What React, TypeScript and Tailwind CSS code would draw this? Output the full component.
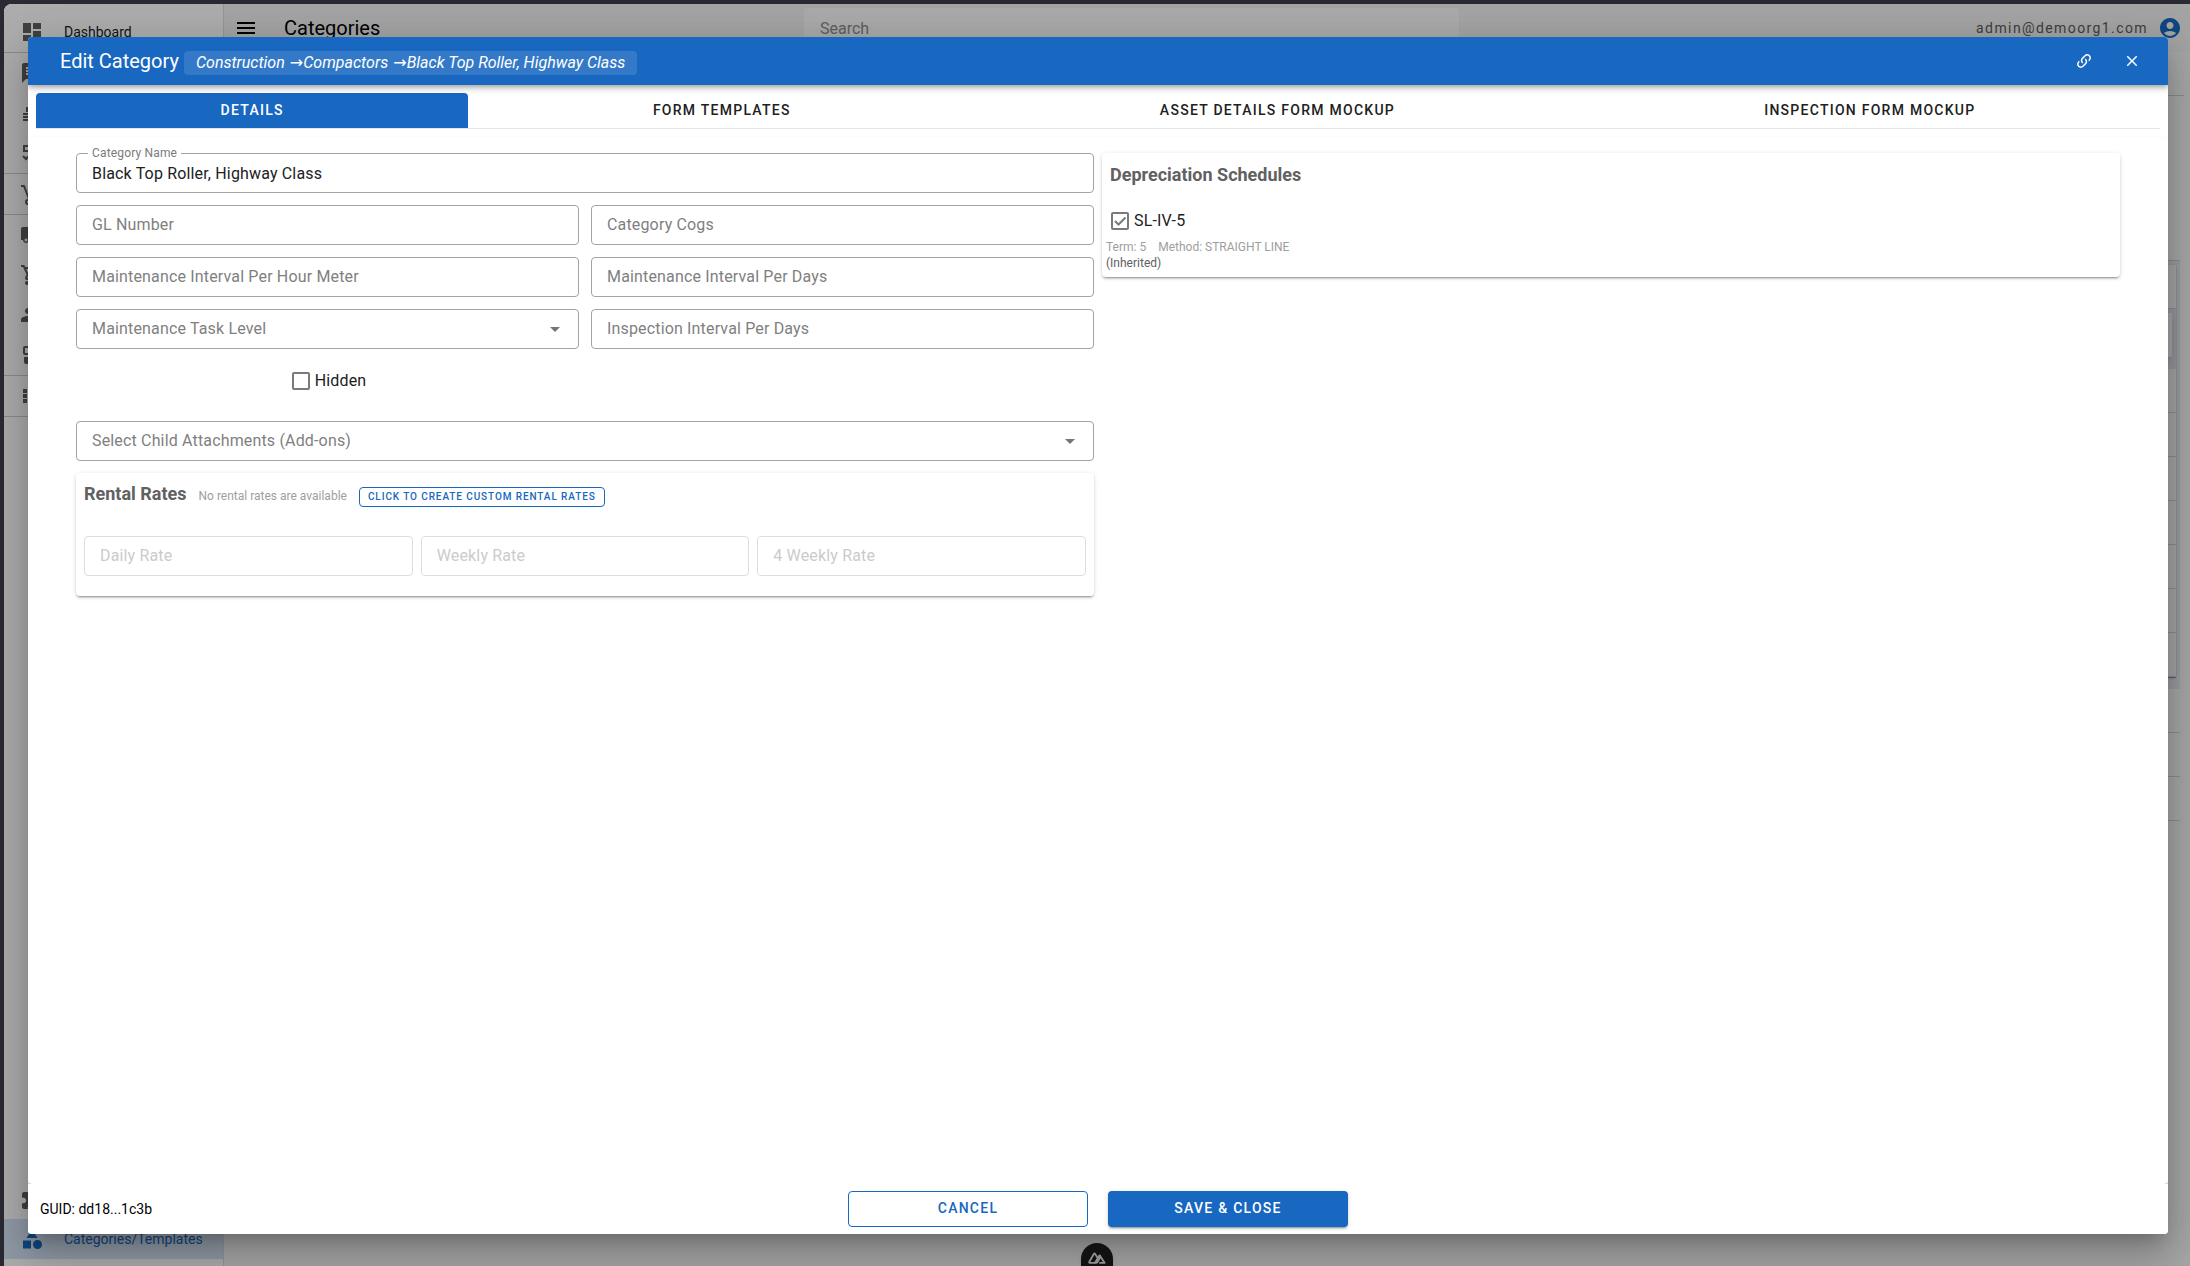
import React, { useState } from 'react';
import {
  MdAccountCircle,
  MdArrowDropDown,
  MdCategory,
  MdClose,
  MdDashboard,
  MdExtension,
  MdGroup,
  MdLocalShipping,
  MdMenu,
  MdMessage,
  MdOutlineShoppingCart,
  MdViewList,
} from 'react-icons/md';

interface FieldProps {
  id: string;
  label: string;
  value?: string;
  disabled?: boolean;
}

interface CheckboxProps {
  id: string;
  label: string;
  defaultChecked?: boolean;
}

interface IconProps {
  className?: string;
}

const JobsiteIcon: React.FC<IconProps> = ({ className }) => (
  <svg viewBox="0 0 24 24" fill="currentColor" className={className}>
    <path d="M8 3h8v2h2v6H6V6h2zM3 12h18v2H3zM3 15h18v2H3zM3 18h18v2H3z" />
  </svg>
);

const ChecklistIcon: React.FC<IconProps> = ({ className }) => (
  <svg viewBox="0 0 24 24" fill="none" stroke="currentColor" strokeWidth="2" className={className}>
    <path d="M4 5h5v5H4zM3 15l3 3 5-5M13 7h8M13 17h8" />
  </svg>
);

const DollyIcon: React.FC<IconProps> = ({ className }) => (
  <svg viewBox="0 0 24 24" fill="none" stroke="currentColor" strokeWidth="2" className={className}>
    <path d="M1 4h3l5 13M10 18l11-4M8 9l8-4 4 8-9 3" />
    <circle cx="8" cy="20" r="2" />
  </svg>
);

const AccountsIcon: React.FC<IconProps> = ({ className }) => (
  <svg viewBox="0 0 24 24" fill="currentColor" className={className}>
    <path d="M5 3h5v2H5v5h5v2H5a2 2 0 0 1-2-2V5a2 2 0 0 1 2-2zM14 3h6v9h-6zM4 14h7v7H6a2 2 0 0 1-2-2zM14 14h6v7h-6z" />
  </svg>
);

const NAV_GROUPS: { name: string; icon: React.ComponentType<IconProps> }[][] = [
  [
    { name: 'Messages', icon: MdMessage },
    { name: 'Jobsites', icon: JobsiteIcon },
    { name: 'Checklists', icon: ChecklistIcon },
  ],
  [{ name: 'Returns', icon: DollyIcon }],
  [
    { name: 'Deliveries', icon: MdLocalShipping },
    { name: 'Orders', icon: MdOutlineShoppingCart },
    { name: 'Customers', icon: MdGroup },
    { name: 'Accounts', icon: AccountsIcon },
  ],
  [{ name: 'Inventory', icon: MdViewList }],
];

const TABS = ['Details', 'Form Templates', 'Asset Details Form Mockup', 'Inspection Form Mockup'];

const BREADCRUMB = ['Construction', 'Compactors', 'Black Top Roller, Highway Class'];

const CARD_SHADOW =
  'shadow-[0_2px_1px_-1px_rgba(0,0,0,0.2),0_1px_1px_0_rgba(0,0,0,0.14),0_1px_3px_0_rgba(0,0,0,0.12)]';

const PANEL_SHADOW =
  'shadow-[0_3px_1px_-2px_rgba(0,0,0,0.2),0_2px_2px_0_rgba(0,0,0,0.14),0_1px_5px_0_rgba(0,0,0,0.12)]';

const LinkVariantIcon: React.FC = () => (
  <svg viewBox="0 0 24 24" fill="currentColor" className="size-[18px]">
    <path d="M10.59,13.41C11,13.8 11,14.44 10.59,14.83C10.2,15.22 9.56,15.22 9.17,14.83C7.22,12.88 7.22,9.71 9.17,7.76V7.76L12.71,4.22C14.66,2.27 17.83,2.27 19.78,4.22C21.73,6.17 21.73,9.34 19.78,11.29L18.29,12.78C18.3,11.96 18.17,11.14 17.89,10.36L18.36,9.88C19.54,8.71 19.54,6.81 18.36,5.64C17.19,4.46 15.29,4.46 14.12,5.64L10.59,9.17C9.41,10.34 9.41,12.24 10.59,13.41M13.41,9.17C13.8,8.78 14.44,8.78 14.83,9.17C16.78,11.12 16.78,14.29 14.83,16.24V16.24L11.29,19.78C9.34,21.73 6.17,21.73 4.22,19.78C2.27,17.83 2.27,14.66 4.22,12.71L5.71,11.22C5.7,12.04 5.83,12.86 6.11,13.65L5.64,14.12C4.46,15.29 4.46,17.19 5.64,18.36C6.81,19.54 8.71,19.54 9.88,18.36L13.41,14.83C14.59,13.66 14.59,11.76 13.41,10.59C13,10.2 13,9.56 13.41,9.17Z" />
  </svg>
);

const TextField: React.FC<FieldProps> = ({ id, label, value = '', disabled }) => {
  const [text, setText] = useState(value);
  return (
    <div className="relative tracking-[0.01em]">
      <input
        id={id}
        value={text}
        disabled={disabled}
        onChange={(e) => setText(e.target.value)}
        className="block h-10 w-full rounded border border-[#a3a3a3] bg-white px-[15px] text-base text-[#212121] outline-none focus:border-[#1867c0] disabled:border-[#dedede]"
      />
      {text ? (
        <label htmlFor={id} className="absolute -top-2 left-3 bg-white px-1 text-xs text-[#7b7b7b]">
          {label}
        </label>
      ) : (
        <label
          htmlFor={id}
          className={`pointer-events-none absolute top-2 left-4 text-base ${disabled ? 'text-[#cbcbcb]' : 'text-[#7f7f7f]'}`}
        >
          {label}
        </label>
      )}
    </div>
  );
};

const SelectField: React.FC<FieldProps> = ({ id, label }) => (
  <div className="relative tracking-[0.01em]">
    <select
      id={id}
      className="block h-10 w-full appearance-none rounded border border-[#a3a3a3] bg-white px-[15px] text-base outline-none focus:border-[#1867c0]"
    >
      <option value="" />
    </select>
    <label htmlFor={id} className="pointer-events-none absolute top-2 left-4 text-base text-[#7f7f7f]">
      {label}
    </label>
    <MdArrowDropDown className="pointer-events-none absolute top-2 right-3 size-6 text-[#757575]" />
  </div>
);

const Checkbox: React.FC<CheckboxProps> = ({ id, label, defaultChecked }) => (
  <div className="flex h-6 items-center gap-0.5">
    <span className="relative flex size-6 items-center justify-center">
      <input
        id={id}
        type="checkbox"
        defaultChecked={defaultChecked}
        className="peer size-[18px] appearance-none rounded-xs border-2 border-[#7a7a7a]"
      />
      <svg
        viewBox="0 0 24 24"
        className="pointer-events-none absolute inset-0 hidden fill-none stroke-[#7a7a7a] stroke-2 peer-checked:block"
      >
        <path d="M7 12l3.5 3.5L17.5 8.5" />
      </svg>
    </span>
    <label htmlFor={id} className="text-base tracking-[0.01em] text-[#212121]">
      {label}
    </label>
  </div>
);

const Sidebar: React.FC = () => (
  <nav className="flex w-[220px] shrink-0 flex-col border-r border-[#dcdcdc] bg-white pt-2 pb-[7px] text-sm text-[#212121]">
    <a href="#dashboard" className="flex h-[41px] items-center gap-5 border-b border-[#cfcfcf] pl-4">
      <MdDashboard className="size-6 text-[#616161]" />
      Dashboard
    </a>
    {NAV_GROUPS.map((group, i) => (
      <div key={i} className="border-b border-[#cfcfcf] last:border-0">
        {group.map(({ name, icon: Icon }) => (
          <a key={name} href="#" aria-label={name} className="flex h-10 items-center pl-4">
            <Icon className="size-6 text-[#616161]" />
          </a>
        ))}
      </div>
    ))}
    <a href="#extensions" aria-label="Extensions" className="mt-auto flex h-10 items-center pl-4">
      <MdExtension className="size-6 text-[#616161]" />
    </a>
    <a href="#categories" className="flex h-10 items-center gap-5 bg-[#d4e3f5] pl-4 text-[#1867c0]">
      <MdCategory className="size-6" />
      Categories/Templates
    </a>
  </nav>
);

const AppBar: React.FC = () => (
  <header className="flex h-12 shrink-0 items-center bg-[#f2f2f2]">
    <div className="flex w-[29.5%] items-center gap-[26px] pl-2.5">
      <button type="button" aria-label="Menu">
        <MdMenu className="size-6" />
      </button>
      <h1 className="text-xl">Categories</h1>
    </div>
    <input
      type="search"
      aria-label="Search"
      placeholder="Search"
      className="h-10 w-1/3 rounded bg-[#fbfbfb] px-4 text-base placeholder:text-[#8c8c8c]"
    />
    <div className="flex flex-1 items-center justify-end gap-2.5 pr-2">
      <span className="text-sm tracking-widest text-[#5c5c5c]">admin@demoorg1.com</span>
      <MdAccountCircle className="size-6 text-[#1867c0]" />
    </div>
  </header>
);

const TableBackdrop: React.FC = () => (
  <div className="flex-1 bg-[#f7f7f7] pt-[43px] pr-1.5">
    <div className="border-t border-[#cfcfcf] pt-[164px] pr-1">
      <div className="border-t border-[#cfcfcf] bg-[#e4e7ec] pt-1 pr-1 pb-3">
        <div className={`bg-[#f5f5f5] ${CARD_SHADOW}`}>
          <div className="h-11 border-b border-[#cfcfcf]" />
          <div className="h-[60px] bg-[#dde1e7] pt-1 pr-1">
            <div className="h-11 bg-[#f5f5f5] shadow-md" />
          </div>
          {[1, 2, 3, 4, 5, 6, 7].map((row) => (
            <div key={row} className="h-11 border-b border-[#cfcfcf]" />
          ))}
        </div>
      </div>
      {[1, 2, 3].map((row) => (
        <div key={row} className="h-11 border-b border-[#cfcfcf]" />
      ))}
    </div>
  </div>
);

const DialogHeader: React.FC = () => (
  <div className="relative z-10 flex h-12 shrink-0 items-center bg-[#1867c0] pr-3 pl-8 text-white shadow-[0_2px_4px_-1px_rgba(0,0,0,0.2),0_4px_5px_0_rgba(0,0,0,0.14),0_1px_10px_0_rgba(0,0,0,0.12)]">
    <div className="flex items-baseline gap-[5px]">
      <h2 id="dialog-title" className="text-xl">
        Edit Category
      </h2>
      <span className="rounded bg-white/12 px-3 text-base italic">
        {BREADCRUMB.map((crumb, i) => (
          <React.Fragment key={crumb}>
            {i > 0 && <span className="font-['DejaVu_Sans',sans-serif]"> →</span>}
            {crumb}
          </React.Fragment>
        ))}
      </span>
    </div>
    <button type="button" aria-label="Copy link" className="ml-auto flex size-12 items-center justify-center">
      <LinkVariantIcon />
    </button>
    <button type="button" aria-label="Close" className="flex size-12 items-center justify-center">
      <MdClose className="size-[18px]" />
    </button>
  </div>
);

const DialogTabs: React.FC = () => {
  const [active, setActive] = useState(TABS[0]);
  return (
    <div role="tablist" className="m-2 flex h-9 shrink-0 border-b border-[#e6e6e6]">
      {TABS.map((tab) => (
        <button
          key={tab}
          type="button"
          role="tab"
          aria-selected={tab === active}
          onClick={() => setActive(tab)}
          className={`flex-auto rounded-t pb-0.5 text-sm font-medium tracking-[0.09em] uppercase ${
            tab === active ? 'bg-[#1867c0] text-white' : 'text-[#212121]'
          }`}
        >
          {tab}
        </button>
      ))}
    </div>
  );
};

const RentalRates: React.FC = () => (
  <section className={`rounded px-2 pt-[7px] pb-5 ${PANEL_SHADOW}`}>
    <div className="flex items-baseline gap-3">
      <h3 className="text-lg leading-7 font-bold text-[#616161]">Rental Rates</h3>
      <span className="text-xs text-[#9e9e9e]">No rental rates are available</span>
      <button
        type="button"
        className="h-5 rounded border border-[#1867c0] px-2 text-[10px] font-medium tracking-[0.09em] text-[#1867c0] uppercase"
      >
        Click to create custom rental rates
      </button>
    </div>
    <div className="mt-7 grid grid-cols-3 gap-2">
      <TextField id="daily-rate" label="Daily Rate" disabled />
      <TextField id="weekly-rate" label="Weekly Rate" disabled />
      <TextField id="four-weekly-rate" label="4 Weekly Rate" disabled />
    </div>
  </section>
);

const DepreciationSchedules: React.FC = () => (
  <section className={`rounded px-1 pt-2 pb-1.5 ${PANEL_SHADOW}`}>
    <h3 className="pl-1 text-lg leading-7 font-bold text-[#616161]">Depreciation Schedules</h3>
    <div className="mt-5 mb-1.5 pl-0.5">
      <Checkbox id="sl-iv-5" label="SL-IV-5" defaultChecked />
    </div>
    <p className="flex gap-3 text-xs text-[#9e9e9e]">
      <span>Term: 5</span>
      <span>Method: STRAIGHT LINE</span>
    </p>
    <p className="text-xs text-[#616161]">(Inherited)</p>
  </section>
);

const EditCategoryDialog: React.FC = () => (
  <div
    role="dialog"
    aria-labelledby="dialog-title"
    className="flex w-full flex-col overflow-hidden rounded bg-white shadow-[0_11px_15px_-7px_rgba(0,0,0,0.2),0_24px_38px_3px_rgba(0,0,0,0.14),0_9px_46px_8px_rgba(0,0,0,0.12)]"
  >
    <DialogHeader />
    <DialogTabs />
    <div className={`grid flex-1 grid-cols-2 content-start items-start gap-2 rounded px-12 pt-4 ${CARD_SHADOW}`}>
      <form className="grid grid-cols-2 gap-3">
        <div className="col-span-2">
          <TextField id="category-name" label="Category Name" value="Black Top Roller, Highway Class" />
        </div>
        <TextField id="gl-number" label="GL Number" />
        <TextField id="category-cogs" label="Category Cogs" />
        <TextField id="interval-hours" label="Maintenance Interval Per Hour Meter" />
        <TextField id="interval-days" label="Maintenance Interval Per Days" />
        <SelectField id="task-level" label="Maintenance Task Level" />
        <TextField id="inspection-days" label="Inspection Interval Per Days" />
        <div className="mb-2 flex h-10 items-center justify-center">
          <Checkbox id="hidden" label="Hidden" />
        </div>
        <div className="col-span-2">
          <SelectField id="child-attachments" label="Select Child Attachments (Add-ons)" />
        </div>
        <div className="col-span-2">
          <RentalRates />
        </div>
      </form>
      <DepreciationSchedules />
    </div>
    <footer className="relative z-10 grid shrink-0 grid-cols-[1fr_auto_1fr] items-center bg-white px-3 pt-[7px] pb-[7px]">
      <span className="text-sm">GUID: dd18...1c3b</span>
      <div className="flex gap-5">
        <button
          type="button"
          className="h-9 w-60 rounded border border-[#1867c0] pb-0.5 text-sm font-medium tracking-[0.09em] text-[#1867c0] uppercase"
        >
          Cancel
        </button>
        <button
          type="button"
          className={`h-9 w-60 rounded bg-[#1867c0] pb-0.5 text-sm font-medium tracking-[0.09em] text-white uppercase ${PANEL_SHADOW}`}
        >
          Save &amp; Close
        </button>
      </div>
    </footer>
  </div>
);

const DevToolsBadge: React.FC = () => (
  <button
    type="button"
    aria-label="DevTools"
    className="absolute bottom-0 left-1/2 flex h-[23px] w-8 -translate-x-1/2 items-end justify-center rounded-t-full bg-[#111] pb-0.5 text-[#8f8f8f] shadow-md"
  >
    <svg viewBox="0 0 20 13" fill="none" stroke="currentColor" strokeWidth="2" strokeLinejoin="round" className="h-3 w-[18px]">
      <path d="M9 12H2.2Q.8 12 1.5 10.6L6.4 2Q7.2.8 8 2L10.6 6.4" />
      <path d="M9 12Q10 12 10.7 10.8L14 5L18.5 12H12.5M10.8 6.6L8.6 10.6Q8 12 6.5 12M10.8 6.6L12.2 4.2Q13 3 13.8 4.2" />
    </svg>
  </button>
);

const App: React.FC = () => {
  return (
    <div className="relative h-screen overflow-hidden bg-[#2b2a33] pt-1 pl-1 font-[Roboto,sans-serif]">
      <div className="flex h-full overflow-hidden rounded-tl-lg bg-white">
        <Sidebar />
        <div className="flex flex-1 flex-col">
          <AppBar />
          <TableBackdrop />
        </div>
      </div>
      <div className="absolute inset-0 top-1 left-1 flex rounded-tl-lg bg-black/32 pt-[33px] pr-[22px] pb-8 pl-6">
        <EditCategoryDialog />
        <DevToolsBadge />
      </div>
    </div>
  );
};

export default App;
